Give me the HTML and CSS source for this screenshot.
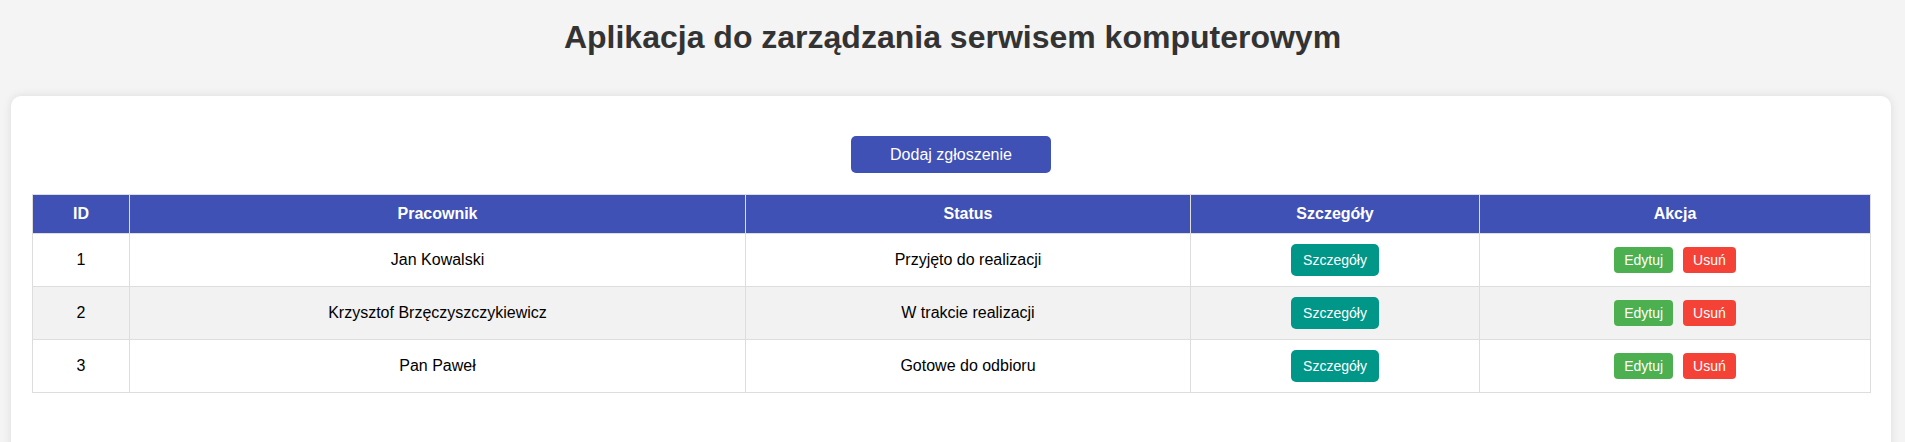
FILE: index.html
```html
<!DOCTYPE html>
<html lang="pl">
<head>
<meta charset="utf-8">
<title>Serwis komputerowy</title>
<link rel="stylesheet" href="styles.css">
</head>
<body>
<header class="page-header">
  <h1 class="title">Aplikacja do zarządzania serwisem komputerowym</h1>
</header>
<main class="container">
  <div class="toolbar">
    <button class="btn btn-add">Dodaj zgłoszenie</button>
  </div>
  <table class="tickets">
    <colgroup>
      <col class="c-id"><col class="c-worker"><col class="c-status"><col class="c-details"><col class="c-action">
    </colgroup>
    <thead>
      <tr><th>ID</th><th>Pracownik</th><th>Status</th><th>Szczegóły</th><th>Akcja</th></tr>
    </thead>
    <tbody>
      <tr>
        <td>1</td><td>Jan Kowalski</td><td>Przyjęto do realizacji</td>
        <td><button class="btn btn-details">Szczegóły</button></td>
        <td><span class="actions"><button class="btn btn-edit">Edytuj</button><button class="btn btn-delete">Usuń</button></span></td>
      </tr>
      <tr>
        <td>2</td><td>Krzysztof Brzęczyszczykiewicz</td><td>W trakcie realizacji</td>
        <td><button class="btn btn-details">Szczegóły</button></td>
        <td><span class="actions"><button class="btn btn-edit">Edytuj</button><button class="btn btn-delete">Usuń</button></span></td>
      </tr>
      <tr>
        <td>3</td><td>Pan Paweł</td><td>Gotowe do odbioru</td>
        <td><button class="btn btn-details">Szczegóły</button></td>
        <td><span class="actions"><button class="btn btn-edit">Edytuj</button><button class="btn btn-delete">Usuń</button></span></td>
      </tr>
    </tbody>
  </table>
</main>
</body>
</html>
```

FILE: styles.css
```css
* { box-sizing: border-box; }

body {
  margin: 0;
  background: #f4f4f4;
  font-family: "Liberation Sans", Arial, sans-serif;
  font-size: 16px;
  color: #000;
}

.page-header {
  padding: 19px 0 40px;
}

.title {
  margin: 0;
  text-align: center;
  font-size: 32px;
  font-weight: bold;
  line-height: 37px;
  color: #333;
}

.container {
  margin: 0 14px 0 11px;
  background: #fff;
  border-radius: 10px;
  box-shadow: 0 0 10px rgba(0, 0, 0, 0.1);
  padding: 40px 21px 80px;
}

.toolbar {
  display: flex;
  justify-content: center;
  margin-bottom: 21px;
}

.btn {
  border: none;
  font-family: "Liberation Sans", Arial, sans-serif;
  color: #fff;
  cursor: pointer;
  line-height: 16px;
}

.btn-add {
  width: 200px;
  height: 37px;
  padding: 0;
  font-size: 16px;
  line-height: 18px;
  background: #3f51b5;
  border-radius: 5px;
}

.tickets {
  width: 100%;
  table-layout: fixed;
  border-collapse: collapse;
}

.c-id { width: 97px; }
.c-worker { width: 616px; }
.c-status { width: 445px; }
.c-details { width: 289px; }
.c-action { width: 391px; }

.tickets th,
.tickets td {
  border: 1px solid #ddd;
  text-align: center;
  vertical-align: middle;
  padding: 10px;
  font-size: 16px;
  line-height: 18px;
}

.tickets th {
  background: #3f51b5;
  color: #fff;
  font-weight: bold;
}

.tickets td {
  height: 53px;
}

.tickets tbody tr:nth-child(even) {
  background: #f2f2f2;
}

.btn-details {
  display: inline-block;
  vertical-align: middle;
  font-size: 14px;
  padding: 8px 12px;
  background: #009688;
  border-radius: 5px;
}

.actions {
  display: inline-flex;
  gap: 10px;
  vertical-align: middle;
}

.btn-edit,
.btn-delete {
  font-size: 14px;
  padding: 5px 10px;
  border-radius: 4px;
}

.btn-edit { background: #4caf50; }
.btn-delete { background: #f44336; }
```
